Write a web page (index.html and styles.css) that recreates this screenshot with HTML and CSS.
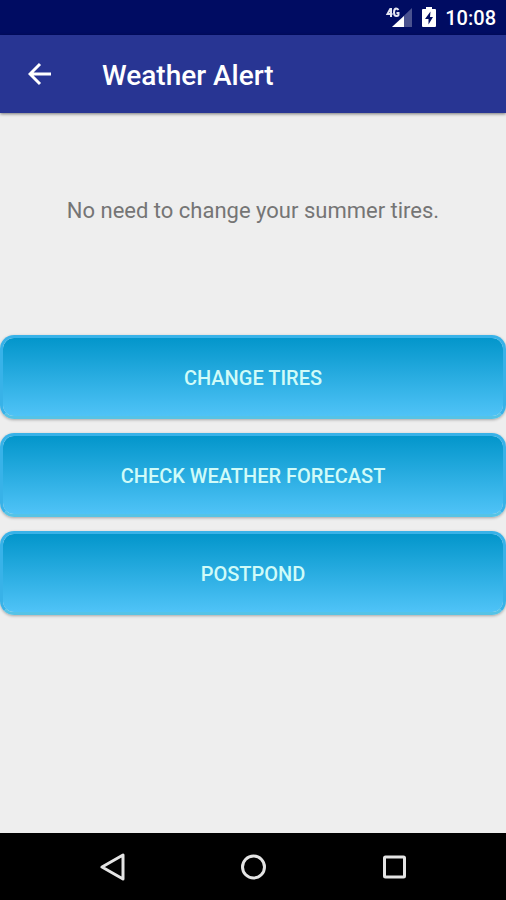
FILE: index.html
```html
<!DOCTYPE html>
<html lang="en">
<head>
<meta charset="utf-8">
<meta name="viewport" content="width=device-width, initial-scale=1">
<title>Weather Alert</title>
<link rel="stylesheet" href="styles.css">
</head>
<body>
<div class="status-bar">
  <svg class="signal-icon" width="28" height="24" viewBox="0 0 28 24" aria-hidden="true">
    <path class="signal-rest" d="M27 2V21H7Z"/>
    <path class="signal-clear" d="M0 0H17V12H0Z"/>
    <path class="signal-level" d="M19 10V21H7Z"/>
    <path class="network-type" d="M5.500 2.500L2.500 8H7.500M6 2V11M13.500 4Q12.500 2.500 11 2.500Q9 3 9 6.500Q9 10 11.500 10Q13 10 13.500 9V7H11.500"/>
  </svg>
  <svg class="battery-icon" width="16" height="24" viewBox="0 0 16 24" aria-hidden="true">
    <path class="battery-body" d="M5 1H11V3H14Q15 3 15 4V20Q15 21 14 21H2Q1 21 1 20V4Q1 3 2 3H5Z"/>
    <path class="battery-bolt" d="M9.500 5.500L4 13H7.500V18.500L12 11H9Z"/>
  </svg>
  <time class="clock">10:08</time>
</div>
<header class="app-bar">
  <button class="back-button" type="button" aria-label="Back">
    <svg width="24" height="24" viewBox="0 0 24 24" aria-hidden="true"><path d="M23 12H2M12 2L2 12L12 22"/></svg>
  </button>
  <h1 class="title">Weather Alert</h1>
</header>
<main class="content">
  <p class="message">No need to change your summer tires.</p>
  <div class="actions">
    <button class="action" type="button">CHANGE TIRES</button>
    <button class="action" type="button">CHECK WEATHER FORECAST</button>
    <button class="action" type="button">POSTPOND</button>
  </div>
</main>
<nav class="nav-bar">
  <button class="nav-button" type="button" aria-label="Back">
    <svg width="28" height="28" viewBox="0 0 28 28" aria-hidden="true"><path d="M25 2V26L4 14Z"/></svg>
  </button>
  <button class="nav-button" type="button" aria-label="Home">
    <svg width="28" height="28" viewBox="0 0 28 28" aria-hidden="true"><circle cx="14.500" cy="14" r="11"/></svg>
  </button>
  <button class="nav-button" type="button" aria-label="Recent apps">
    <svg width="28" height="28" viewBox="0 0 28 28" aria-hidden="true"><rect x="4.500" y="4" width="20" height="20" rx="1"/></svg>
  </button>
</nav>
</body>
</html>
```
FILE: styles.css
```css
* {
  box-sizing: border-box;
}

body {
  display: flex;
  flex-direction: column;
  min-height: 100vh;
  margin: 0;
  background: #eeeeee;
  font-family: Roboto, "Liberation Sans", sans-serif;
}

button {
  margin: 0;
  padding: 0;
  border: 0;
  background: none;
  font-family: inherit;
}

svg {
  display: block;
}

.status-bar {
  display: flex;
  align-items: center;
  justify-content: flex-end;
  height: 35px;
  padding-right: 10px;
  background: #000c62;
}

.signal-rest {
  fill: #4a528f;
}

.signal-clear {
  fill: #000c62;
}

.signal-level,
.battery-body {
  fill: #ffffff;
}

.network-type {
  fill: none;
  stroke: #e4e6f2;
  stroke-width: 2;
}

.battery-icon {
  margin: 0 8px;
}

.battery-bolt {
  fill: #000c62;
}

.clock {
  color: #ffffff;
  font-size: 20px;
  font-weight: 500;
  line-height: 24px;
}

.app-bar {
  display: flex;
  align-items: center;
  gap: 50px;
  height: 78px;
  padding: 0 28px;
  background: #283593;
  box-shadow: 0 1px 3px rgba(0, 0, 0, 0.5);
}

.back-button path {
  fill: none;
  stroke: #ffffff;
  stroke-width: 3;
}

.title {
  margin: 0;
  padding-top: 4px;
  color: #ffffff;
  font-size: 28px;
  font-weight: 500;
  line-height: 32px;
}

.content {
  flex: 1;
}

.message {
  margin: 0;
  padding: 82px 16px 108px;
  color: #757575;
  font-size: 22px;
  line-height: 32px;
  text-align: center;
}

.actions {
  display: flex;
  flex-direction: column;
  gap: 14px;
}

.action {
  width: 100%;
  height: 84px;
  padding-top: 2px;
  border: 3px solid #38b2e8;
  border-bottom-color: #55c3e6;
  border-radius: 14px;
  background: linear-gradient(#0396cb, #4fc3f7) padding-box;
  box-shadow: 0 1px 3px rgba(0, 0, 0, 0.3);
  color: #d0fbf8;
  font-size: 20px;
  font-weight: 500;
  line-height: 24px;
}

.nav-bar {
  display: flex;
  align-items: center;
  justify-content: center;
  gap: 113px;
  height: 67px;
  background: #000000;
}

.nav-button svg {
  fill: none;
  stroke: #e4e4e4;
  stroke-width: 3;
  stroke-linejoin: round;
}
```
